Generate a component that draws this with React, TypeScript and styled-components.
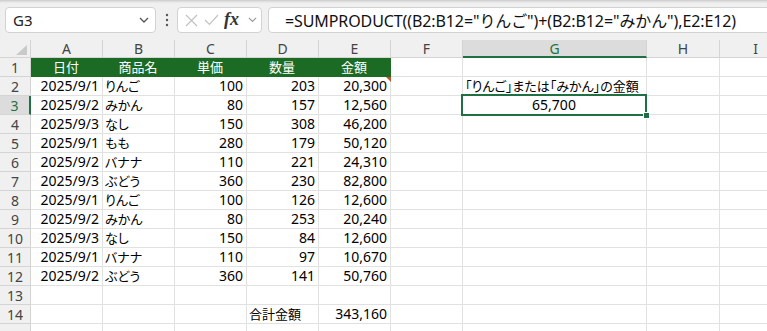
import React from "react";
import styled, { createGlobalStyle, css } from "styled-components";

const GREEN = "#1c6b25";
const GRID = "#e1e1e1";
const HEAD_LINE = "#d4d4d4";
const SEL = "#1f7144";

const Global = createGlobalStyle`
  html, body { margin: 0; padding: 0; background: #ffffff; overflow: hidden; }
  body { font-family: "Noto Sans", "Noto Sans CJK JP", sans-serif; color: #000; }
  * { box-sizing: border-box; }
`;

const Page = styled.div`
  width: 767px;
  height: 331px;
  overflow: hidden;
  display: flex;
  flex-direction: column;
  background: #fff;
`;

const Toolbar = styled.div`
  flex: none;
  height: 40px;
  display: flex;
  align-items: flex-start;
  padding: 7px 0 0 5px;
  background: #f0f0f0;
  box-shadow: inset 0 3px 3px -2px rgba(0, 0, 0, 0.2);
`;

const Box = styled.div`
  height: 26px;
  background: #fff;
  border: 1px solid #d2d2d2;
  border-radius: 4px;
  display: flex;
  align-items: center;
`;

const NameBox = styled(Box)`
  width: 151px;
  padding: 0 6px 0 7px;
  justify-content: space-between;
  font-size: 15px;
  color: #222;
`;

const Dots = styled.div`
  width: 21px;
  height: 26px;
  display: flex;
  align-items: center;
  justify-content: center;
`;

const FxBox = styled(Box)`
  width: 85px;
  padding: 0 4px 0 7px;
  justify-content: space-between;
`;

const FormulaBox = styled(Box)`
  flex: 1;
  margin-left: 6px;
  margin-right: -12px;
  padding-left: 16px;
  font-size: 16px;
  letter-spacing: -0.1px;
  color: #111;
  white-space: nowrap;
`;

const Jp = styled.span`
  font-family: "Noto Sans CJK JP", sans-serif;
  font-size: 13px;
  font-feature-settings: "palt";
`;

const Sheet = styled.div`
  display: grid;
  grid-template-columns: 31px repeat(6, 72px) 184px 73px 72px;
  grid-template-rows: 18px repeat(15, 19px);
`;

const Corner = styled.div`
  position: relative;
  background: #f0f0f0;
  border-right: 1px solid ${HEAD_LINE};
  border-bottom: 1px solid ${HEAD_LINE};
`;

const CornerTri = styled.div`
  position: absolute;
  right: 3px;
  bottom: 2px;
  width: 0;
  height: 0;
  border-left: 11px solid transparent;
  border-bottom: 10px solid #c9c9c9;
`;

const ColHead = styled.div<{ $active?: boolean }>`
  background: #f0f0f0;
  border-right: 1px solid ${HEAD_LINE};
  border-bottom: 1px solid ${HEAD_LINE};
  display: flex;
  align-items: center;
  justify-content: center;
  font-size: 14px;
  color: #444;
  ${(p) =>
    p.$active &&
    css`
      background: #dcdcdc;
      color: ${SEL};
      border-bottom: 2px solid ${SEL};
    `}
`;

const RowHead = styled.div<{ $active?: boolean }>`
  background: #f0f0f0;
  border-right: 1px solid ${HEAD_LINE};
  border-bottom: 1px solid ${HEAD_LINE};
  display: flex;
  align-items: center;
  justify-content: center;
  font-size: 14px;
  color: #444;
  ${(p) =>
    p.$active &&
    css`
      background: #dcdcdc;
      color: ${SEL};
      border-right: 2px solid ${SEL};
    `}
`;

type Align = "left" | "right" | "center";

const Cell = styled.div<{ $align?: Align; $fill?: string; $white?: boolean; $selected?: boolean }>`
  position: relative;
  z-index: ${(p) => (p.$selected ? 2 : "auto")};
  border-right: 1px solid ${(p) => p.$fill || GRID};
  border-bottom: 1px solid ${(p) => p.$fill || GRID};
  background: ${(p) => p.$fill || "#fff"};
  color: ${(p) => (p.$white ? "#fff" : "#000")};
  font-size: 14px;
  line-height: 18px;
  white-space: nowrap;
  display: flex;
  align-items: center;
  justify-content: ${(p) =>
    p.$align === "right" ? "flex-end" : p.$align === "center" ? "center" : "flex-start"};
  padding: 0 3px 0 2px;
  overflow: visible;
`;

const NoteMark = styled.div`
  position: absolute;
  top: 0;
  right: -1px;
  width: 0;
  height: 0;
  border-left: 5px solid transparent;
  border-top: 5px solid #c4512b;
`;

const Selection = styled.div`
  position: absolute;
  left: -2px;
  top: -2px;
  right: -1px;
  bottom: -2px;
  border: 2px solid ${SEL};
  pointer-events: none;
`;

const Handle = styled.div`
  position: absolute;
  right: -5px;
  bottom: -5px;
  width: 7px;
  height: 7px;
  background: ${SEL};
  border: 1px solid #fff;
`;

const Chevron = ({ color = "#555", size = 10 }: { color?: string; size?: number }) => (
  <svg width={size} height={size * 0.6} viewBox="0 0 10 6">
    <path d="M1 1 L5 5 L9 1" fill="none" stroke={color} strokeWidth="1.3" />
  </svg>
);

const cols = ["A", "B", "C", "D", "E", "F", "G", "H", "I"];

const data: [string, string, string, string, string][] = [
  ["2025/9/1", "りんご", "100", "203", "20,300"],
  ["2025/9/2", "みかん", "80", "157", "12,560"],
  ["2025/9/3", "なし", "150", "308", "46,200"],
  ["2025/9/1", "もも", "280", "179", "50,120"],
  ["2025/9/2", "バナナ", "110", "221", "24,310"],
  ["2025/9/3", "ぶどう", "360", "230", "82,800"],
  ["2025/9/1", "りんご", "100", "126", "12,600"],
  ["2025/9/2", "みかん", "80", "253", "20,240"],
  ["2025/9/3", "なし", "150", "84", "12,600"],
  ["2025/9/1", "バナナ", "110", "97", "10,670"],
  ["2025/9/2", "ぶどう", "360", "141", "50,760"],
];

const headers = ["日付", "商品名", "単価", "数量", "金額"];

export default function App() {
  const rows: React.ReactNode[] = [];

  rows.push(
    <React.Fragment key="r1">
      <RowHead>1</RowHead>
      {headers.map((h) => (
        <Cell key={h} $align="center" $fill={GREEN} $white>
          <Jp>{h}</Jp>
        </Cell>
      ))}
      {cols.slice(5).map((c) => (
        <Cell key={c} />
      ))}
    </React.Fragment>
  );

  data.forEach((r, i) => {
    const n = i + 2;
    rows.push(
      <React.Fragment key={"r" + n}>
        <RowHead $active={n === 3}>{n}</RowHead>
        <Cell $align="right">{r[0]}</Cell>
        <Cell>
          <Jp>{r[1]}</Jp>
        </Cell>
        <Cell $align="right">{r[2]}</Cell>
        <Cell $align="right">{r[3]}</Cell>
        <Cell $align="right">
          {r[4]}
          {n === 2 && <NoteMark />}
        </Cell>
        <Cell />
        {n === 2 ? (
          <Cell>
            <Jp>「りんご」または「みかん」の金額</Jp>
          </Cell>
        ) : n === 3 ? (
          <Cell $align="center" $selected>
            65,700
            <Selection>
              <Handle />
            </Selection>
          </Cell>
        ) : (
          <Cell />
        )}
        <Cell />
        <Cell />
      </React.Fragment>
    );
  });

  [13, 14, 15].forEach((n) => {
    rows.push(
      <React.Fragment key={"r" + n}>
        <RowHead>{n < 15 ? n : ""}</RowHead>
        <Cell />
        <Cell />
        <Cell />
        <Cell>{n === 14 && <Jp>合計金額</Jp>}</Cell>
        <Cell $align="right">{n === 14 && "343,160"}</Cell>
        <Cell />
        <Cell />
        <Cell />
        <Cell />
      </React.Fragment>
    );
  });

  return (
    <Page>
      <Global />
      <Toolbar>
        <NameBox>
          <span>G3</span>
          <Chevron color="#555" />
        </NameBox>
        <Dots>
          <svg width="4" height="14" viewBox="0 0 4 14">
            <circle cx="2" cy="2" r="1.2" fill="#555" />
            <circle cx="2" cy="7" r="1.2" fill="#555" />
            <circle cx="2" cy="12" r="1.2" fill="#555" />
          </svg>
        </Dots>
        <FxBox>
          <svg width="13" height="13" viewBox="0 0 13 13">
            <path d="M1 1 L12 12 M12 1 L1 12" stroke="#c2c2c2" strokeWidth="1.2" fill="none" />
          </svg>
          <svg width="15" height="12" viewBox="0 0 15 12">
            <path d="M1 6 L5.5 10.5 L14 1" stroke="#c2c2c2" strokeWidth="1.2" fill="none" />
          </svg>
          <svg width="18" height="20" viewBox="0 0 18 20">
            <text
              x="0"
              y="15"
              fontFamily="'Liberation Serif', serif"
              fontStyle="italic"
              fontWeight="bold"
              fontSize="18"
              fill="#333"
            >
              fx
            </text>
          </svg>
          <Chevron color="#999" size={9} />
        </FxBox>
        <FormulaBox>
          =SUMPRODUCT((B2:B12="りんご")+(B2:B12="みかん"),E2:E12)
        </FormulaBox>
      </Toolbar>
      <Sheet>
        <Corner>
          <CornerTri />
        </Corner>
        {cols.map((c) => (
          <ColHead key={c} $active={c === "G"}>
            {c}
          </ColHead>
        ))}
        {rows}
      </Sheet>
    </Page>
  );
}
